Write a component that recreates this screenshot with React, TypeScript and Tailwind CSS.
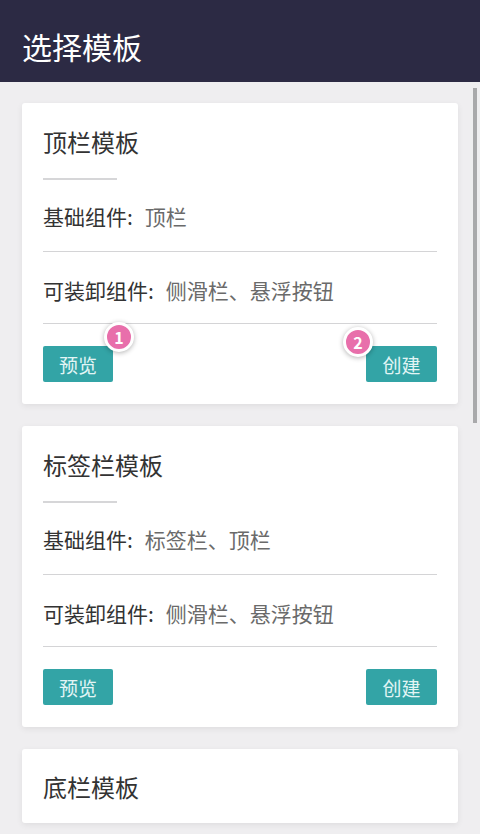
const font = { fontFamily: '"Noto Sans CJK SC", "Noto Sans", sans-serif' };

type Template = {
  title: string;
  base?: string;
  removable?: string;
  badges?: boolean;
  collapsed?: boolean;
};

const templates: Template[] = [
  { title: '顶栏模板', base: '顶栏', removable: '侧滑栏、悬浮按钮', badges: true },
  { title: '标签栏模板', base: '标签栏、顶栏', removable: '侧滑栏、悬浮按钮' },
  { title: '底栏模板', collapsed: true },
];

function Badge({ n, className }: { n: number; className: string }) {
  return (
    <span
      className={`absolute flex h-[30px] w-[30px] items-center justify-center rounded-full border-[3px] border-white bg-[#e86fab] text-[16px] font-bold leading-none text-white shadow-[0_1px_5px_rgba(0,0,0,0.3)] ${className}`}
    >
      {n}
    </span>
  );
}

function InfoRow({ label, value, last }: { label: string; value: string; last?: boolean }) {
  return (
    <div className={`flex h-[72px] items-center border-b border-[#d4d4d6] ${last ? 'pt-1' : ''}`}>
      <span className="text-[21px] leading-[30px] text-[#333333]">{label}:</span>
      <span className="ml-[12px] text-[21px] leading-[30px] text-[#6a6a6a]">{value}</span>
    </div>
  );
}

function TemplateCard({ t }: { t: Template }) {
  if (t.collapsed) {
    return (
      <div className="rounded-[3px] bg-white px-[21px] pb-[20px] pt-[22px] shadow-[0_2px_6px_rgba(0,0,0,0.07)]">
        <h2 className="m-0 text-[24px] font-normal leading-[32px] text-[#333333]">{t.title}</h2>
      </div>
    );
  }
  return (
    <div className="rounded-[3px] bg-white px-[21px] pb-[22px] pt-[23px] shadow-[0_2px_6px_rgba(0,0,0,0.07)]">
      <h2 className="m-0 text-[24px] font-normal leading-[32px] text-[#333333]">{t.title}</h2>
      <div className="mt-[20px] h-[2px] w-[74px] bg-[#d6d6d8]" />
      <InfoRow label="基础组件" value={t.base ?? ''} />
      <InfoRow label="可装卸组件" value={t.removable ?? ''} last />
      <div className="mt-[22px] flex items-center justify-between">
        <button
          type="button"
          className="relative h-[36px] w-[70px] rounded-[2px] bg-[#33a4a6] text-[19px] leading-none text-[#e2f5f5]"
        >
          预览
          {t.badges ? <Badge n={1} className="left-[61px] top-[-24px]" /> : null}
        </button>
        <button
          type="button"
          className="relative h-[36px] w-[71px] rounded-[2px] bg-[#33a4a6] text-[19px] leading-none text-[#e2f5f5]"
        >
          创建
          {t.badges ? <Badge n={2} className="left-[-23px] top-[-19px]" /> : null}
        </button>
      </div>
    </div>
  );
}

export default function App() {
  return (
    <div className="relative h-[834px] w-[480px] overflow-hidden bg-[#efeef0]" style={font}>
      <header className="flex h-[82px] items-center bg-[#2c2a44] pl-[22px] pt-[10px]">
        <h1 className="m-0 text-[30px] font-normal leading-none text-white">选择模板</h1>
      </header>
      <main className="flex flex-col gap-[22px] px-[22px] pt-[21px]">
        {templates.map((t) => (
          <TemplateCard key={t.title} t={t} />
        ))}
      </main>
      <div className="absolute right-[3px] top-[88px] h-[335px] w-[4px] bg-[#a9a9ab]" />
    </div>
  );
}
